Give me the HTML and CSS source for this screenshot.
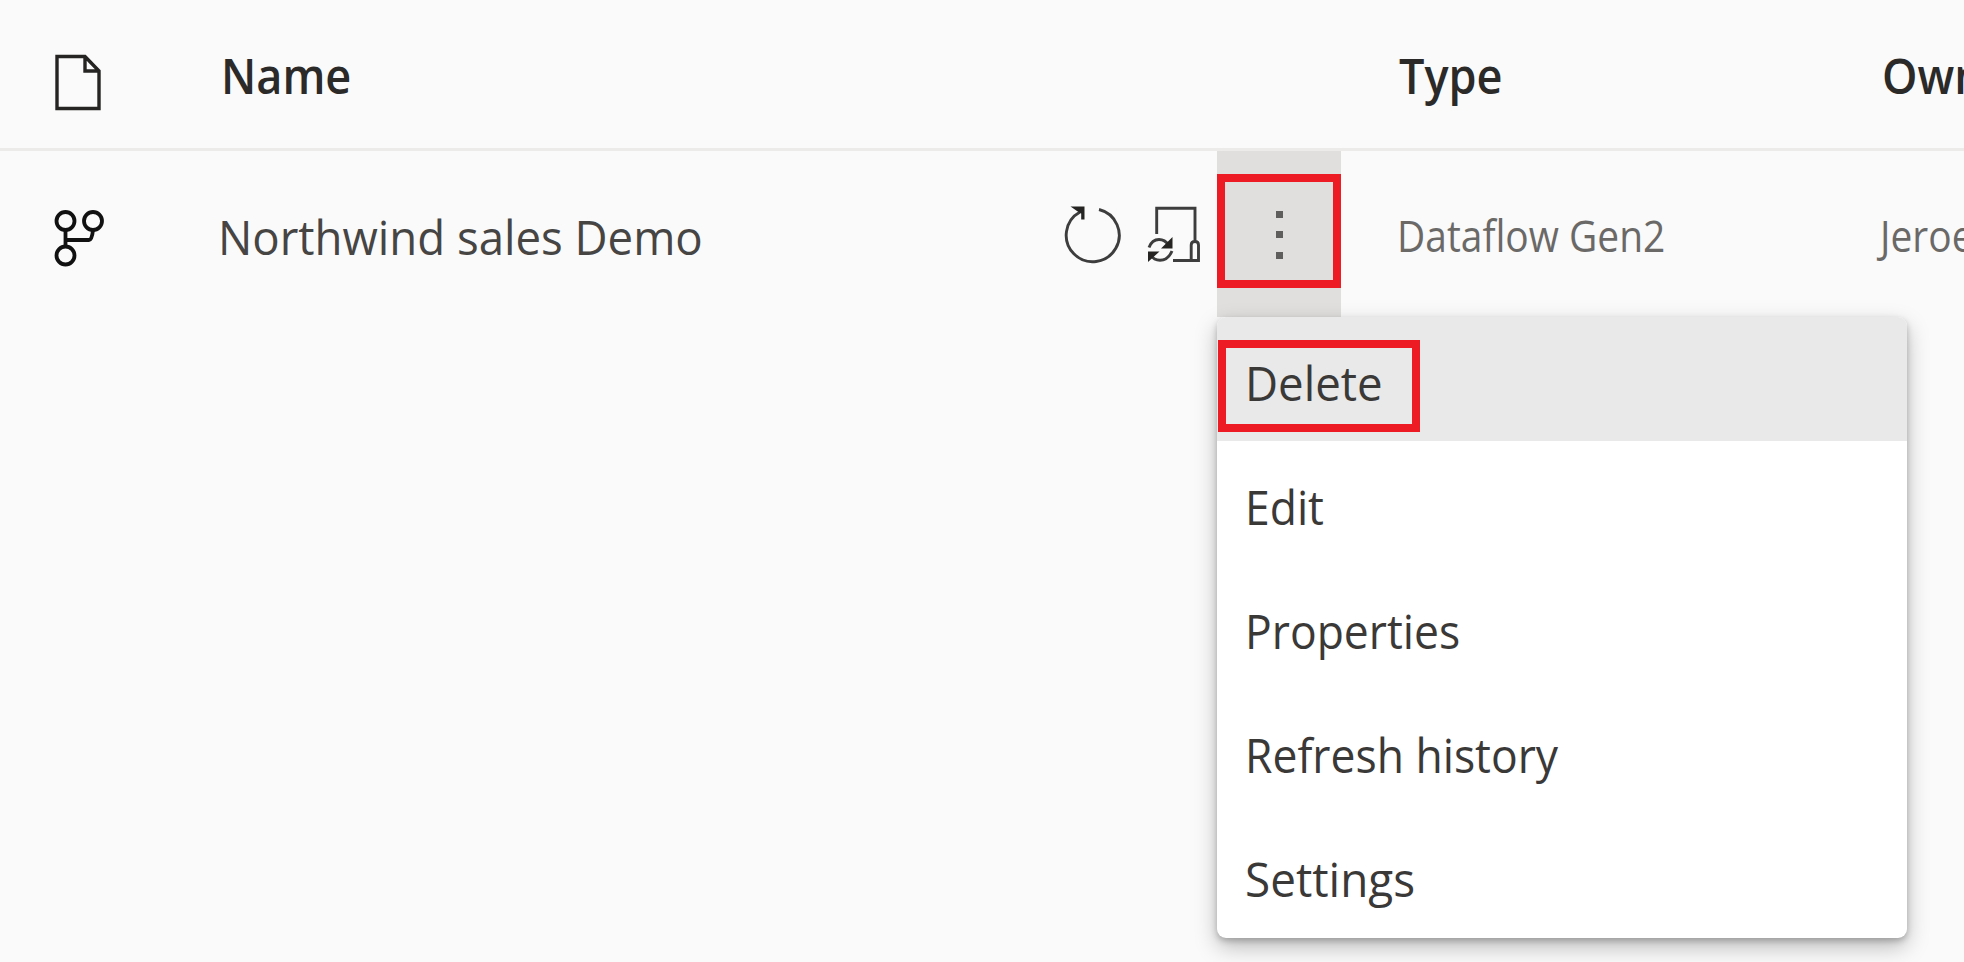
FILE: index.html
```html
<!DOCTYPE html>
<html lang="en">
<head>
<meta charset="utf-8">
<title>Workspace items</title>
<link rel="stylesheet" href="styles.css">
</head>
<body>
<main class="list">
  <header class="row head">
    <div class="cell icon">
      <svg class="glyph file" width="48" height="58" viewBox="0 0 48 58"><path d="M3 2.500H31L45 17V54.500H3ZM31 2.500V17H45" /></svg>
    </div>
    <div class="cell name"><span class="label t-name">Name</span></div>
    <div class="cell type"><span class="label t-type">Type</span></div>
    <div class="cell owner"><span class="label t-owner">Owner</span></div>
  </header>
  <section class="row item">
    <div class="cell icon">
      <svg class="glyph branch" width="52" height="60" viewBox="0 0 52 60"><circle cx="11.500" cy="12" r="9"/><circle cx="39" cy="12" r="9"/><circle cx="11.500" cy="46.500" r="9"/><path d="M11.500 21V37.500M11.500 31H35Q38 31 39 21"/></svg>
    </div>
    <div class="cell name"><span class="label t-item">Northwind sales Demo</span>
      <div class="actions">
        <svg class="glyph refresh" width="60" height="60" viewBox="0 0 60 60"><path d="M37 4.500A26.500 26.500 0 1 1 18 7"/><path class="solid" d="M8.500 1.500H22.500V14.500H19.200V8.500L15 6Z"/></svg>
        <svg class="glyph schedule" width="56" height="60" viewBox="0 0 56 60"><path d="M10.700 29V3.300H49V37M27 55.500H52.500V40Q52.500 36.500 49 36.500Q45.200 36.500 45.200 40V55.500"/><path d="M3 42.500Q6 34.500 13 34.500Q19 34.500 22.500 40M26 46Q22 55.300 14 55.300Q8 55.300 4.500 50"/><path class="solid" d="M26.500 32V43.500H15ZM2 57V46.500H13.500Z"/></svg>
      </div>
    </div>
    <div class="cell more">
      <button class="kebab" aria-label="More options"><i></i><i></i><i></i></button>
      <nav class="menu">
        <a class="entry active"><span class="label m-delete">Delete</span></a>
        <a class="entry"><span class="label m-edit">Edit</span></a>
        <a class="entry"><span class="label m-prop">Properties</span></a>
        <a class="entry"><span class="label m-hist">Refresh history</span></a>
        <a class="entry"><span class="label m-set">Settings</span></a>
        <div class="focus"></div>
      </nav>
    </div>
    <div class="cell type"><span class="label t-flow">Dataflow Gen2</span></div>
    <div class="cell owner"><span class="label t-jeroen">Jeroen</span></div>
  </section>
</main>
</body>
</html>
```

FILE: styles.css
```css
* { box-sizing: border-box; }
body { margin: 0; width: 1964px; height: 962px; overflow: hidden; background: #fafafa; color: #2b2a29; font-family: "Open Sans", "Noto Sans", sans-serif; }
.row { display: grid; width: 1964px; }
.head { height: 151px; border-bottom: 3px solid #edebe9; grid-template-columns: 221px 1178px 483px 1fr; font-size: 48px; font-weight: 600; line-height: 66px; }
.head .cell { padding-top: 43px; }
.item { height: 166px; grid-template-columns: 218px 999px 124px 539px 1fr; font-size: 48px; line-height: 66px; }
.item .cell { padding-top: 53px; }
.cell { min-width: 0; }
.label { display: block; white-space: nowrap; transform-origin: 0 50%; }
.t-name, .t-type, .t-owner { transform: scaleX(.938); }
.t-item { color: #464544; transform: scaleX(.949); }
.t-flow, .t-jeroen { color: #6b6967; transform: scaleX(.895); font-size: 43.500px; line-height: 64px; }
.glyph { display: block; fill: none; stroke: #252423; stroke-width: 3.400; }
.refresh, .schedule { stroke: #3d3d3d; stroke-width: 2.900; }
.branch { stroke: #111; stroke-width: 3.800; }
.solid { fill: #252423; stroke: none; }
.cell.icon { padding-left: 54px; }
.item .icon.cell { padding-top: 58px; }
.cell.name { display: flex; justify-content: space-between; align-items: flex-start; }
.head .icon.cell { padding-top: 54px; }
.item .type { padding-left: 56px; }
.actions { display: flex; gap: 24px; padding: 1px 15px 0 0; }
.item .more.cell { position: relative; padding-top: 23px; background: #e1dfdd; }
.kebab { display: flex; flex-direction: column; align-items: center; justify-content: center; gap: 13.500px; width: 124px; height: 114px; border: 8px solid #ed1c24; background: #e1dfdd; padding: 7px 0 0 0; }
.kebab i { width: 7px; height: 7px; background: #605e5c; }
.menu { position: absolute; left: 0; top: 166px; width: 690px; height: 621px; background: #fff; border-radius: 9px; box-shadow: 0 9px 22px rgba(0,0,0,.25), 0 3px 6px rgba(0,0,0,.22); overflow: hidden; }
.entry { display: flex; height: 124.200px; padding: 7px 0 0 28px; align-items: center; color: #3a3938; }
.active { background: #e9e9e9; }
.m-delete { transform: scaleX(.95); }
.m-edit, .m-prop, .m-hist { transform: scaleX(.926); }
.m-set { transform: scaleX(.955); }
.focus { position: absolute; left: 1px; top: 23px; width: 202px; height: 92px; border: 8px solid #ed1c24; }
```
